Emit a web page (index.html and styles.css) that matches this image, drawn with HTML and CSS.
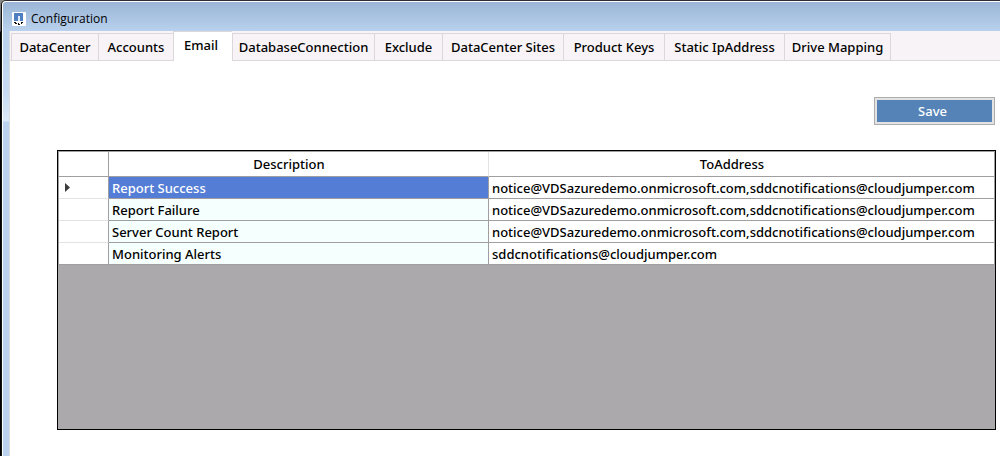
FILE: index.html
```html
<!DOCTYPE html>
<html lang="en">
<head>
<meta charset="utf-8">
<title>Configuration</title>
<link rel="stylesheet" href="styles.css">
</head>
<body>
<div class="desktop">
  <div class="window">
    <header class="titlebar">
      <svg class="app-icon" width="14" height="14" viewBox="0 0 14 14" shape-rendering="crispEdges" aria-hidden="true">
        <rect width="14" height="14" rx="1" fill="#fff"/>
        <path d="M2 1h9v8H8V4H6v5H2z" fill="#4f7fc0"/>
        <path d="M6 4h2v5H6z" fill="#dfeaf7"/>
        <path d="M2 10h2v1h1v1H3v-1H2zM6 11h1v1h1v1H6zM9 10h2v1h-1v1H9z" fill="#111"/>
      </svg>
      <span class="title">Configuration</span>
    </header>
    <main class="client">
      <nav class="tabs" role="tablist">
        <button class="tab" role="tab">DataCenter</button>
        <button class="tab" role="tab">Accounts</button>
        <button class="tab active" role="tab" aria-selected="true">Email</button>
        <button class="tab" role="tab">DatabaseConnection</button>
        <button class="tab" role="tab">Exclude</button>
        <button class="tab" role="tab">DataCenter Sites</button>
        <button class="tab" role="tab">Product Keys</button>
        <button class="tab" role="tab">Static IpAddress</button>
        <button class="tab" role="tab">Drive Mapping</button>
      </nav>
      <section class="page">
        <div class="actions"><button class="save">Save</button></div>
        <div class="grid-box">
          <table class="grid">
            <colgroup><col class="col-mark"><col class="col-desc"><col></colgroup>
            <thead>
              <tr><th></th><th>Description</th><th>ToAddress</th></tr>
            </thead>
            <tbody>
              <tr><td class="mark"><svg class="arrow" width="5" height="9" viewBox="0 0 5 9" aria-hidden="true"><path d="M0 0l5 4.5L0 9z" fill="#3c3c3c"/></svg></td><td class="desc selected">Report Success</td><td>notice@VDSazuredemo.onmicrosoft.com,sddcnotifications@cloudjumper.com</td></tr>
              <tr><td class="mark"></td><td class="desc">Report Failure</td><td>notice@VDSazuredemo.onmicrosoft.com,sddcnotifications@cloudjumper.com</td></tr>
              <tr><td class="mark"></td><td class="desc">Server Count Report</td><td>notice@VDSazuredemo.onmicrosoft.com,sddcnotifications@cloudjumper.com</td></tr>
              <tr><td class="mark"></td><td class="desc">Monitoring Alerts</td><td>sddcnotifications@cloudjumper.com</td></tr>
            </tbody>
          </table>
        </div>
      </section>
    </main>
  </div>
</div>
</body>
</html>
```
FILE: styles.css
```css
* { box-sizing: border-box; }
body {
  margin: 0;
  font: 500 13px/20px "Noto Sans", "Open Sans", sans-serif;
  color: #000;
}
button { font: inherit; color: inherit; margin: 0; }
.desktop {
  min-height: 100vh;
  display: flex;
  background: linear-gradient(#8a8a8a, #5a5a60 31px, #000 32px);
  padding: 1px 0 0 2px;
}
.window {
  flex: 1;
  display: flex;
  flex-direction: column;
  min-width: 0;
  border-top: 1px solid #fff;
  border-left: 1px solid #fff;
  border-top-left-radius: 4px;
  background: linear-gradient(#9ab5d7, #b9d1ec 29px, #c6dbf2 90px, #dce9f8 119px, #bbd2ee 120px);
  padding-left: 6px;
  box-shadow: 0 -1px 0 #2c2c34, -1px 0 0 #111;
}
.titlebar {
  height: 29px;
  display: flex;
  align-items: center;
  gap: 5px;
  padding: 5px 0 0 3px;
}
.title { font: 400 12px/16px "Open Sans", "Noto Sans", sans-serif; }
.app-icon { border-radius: 1px; }
.client {
  flex: 1;
  display: flex;
  flex-direction: column;
  border-left: 1px solid #dcdcdf;
  background: #fff;
}
.tabs {
  height: 30px;
  display: grid;
  grid-template-columns: 87px 75px 59px 142px 68px 121px 101px 120px 107px;
  align-items: end;
  padding-left: 1px;
  background: #f7f3f6;
  box-shadow: inset 0 -1px #dbd7da;
}
.tab {
  height: 28px;
  padding: 0;
  border: solid #dbd7da;
  border-width: 1px 0 1px 1px;
  background: #f7f3f6;
  white-space: nowrap;
}
.tab:last-child { border-right-width: 1px; }
.tab.active {
  height: 30px;
  padding: 0 4px 4px 0;
  background: #fff;
  border-bottom: 0;
}
.page {
  flex: 1;
  display: flex;
  flex-direction: column;
  gap: 25px;
  padding: 36px 4px 26px 47px;
}
.actions { display: flex; justify-content: flex-end; padding-right: 1px; }
.save {
  width: 121px;
  height: 28px;
  padding: 0 4px 0 0;
  border: 1px solid #adadad;
  background: #5583b7;
  box-shadow: inset 0 0 0 2px #e3e3e3;
  color: #fff;
}
.grid-box {
  flex: 1;
  border: 1px solid #000;
  background: #aba9ab;
}
.grid {
  width: 100%;
  table-layout: fixed;
  border-collapse: separate;
  border-spacing: 0;
  background: #fff;
  border-top: 1px solid #a09ea0;
  border-left: 1px solid #a09ea0;
}
.col-mark { width: 50px; }
.col-desc { width: 380px; }
.grid th, .grid td {
  padding: 0 3px;
  border-right: 1px solid #a09ea0;
  border-bottom: 1px solid #a09ea0;
  font-weight: 500;
  white-space: nowrap;
}
.grid th { height: 25px; padding-right: 22px; }
.grid th:nth-child(2) { border-right-color: #e3e3e3; }
.grid td { height: 22px; text-align: left; }
.grid td.mark { padding-left: 6px; border-bottom-color: #e3e3e3; }
.grid tr:last-child .mark { border-bottom-color: #a09ea0; }
.grid .desc { background: #f5fffe; }
.grid .selected { background: #547dd6; color: #fff; }
.arrow { display: block; }
```
